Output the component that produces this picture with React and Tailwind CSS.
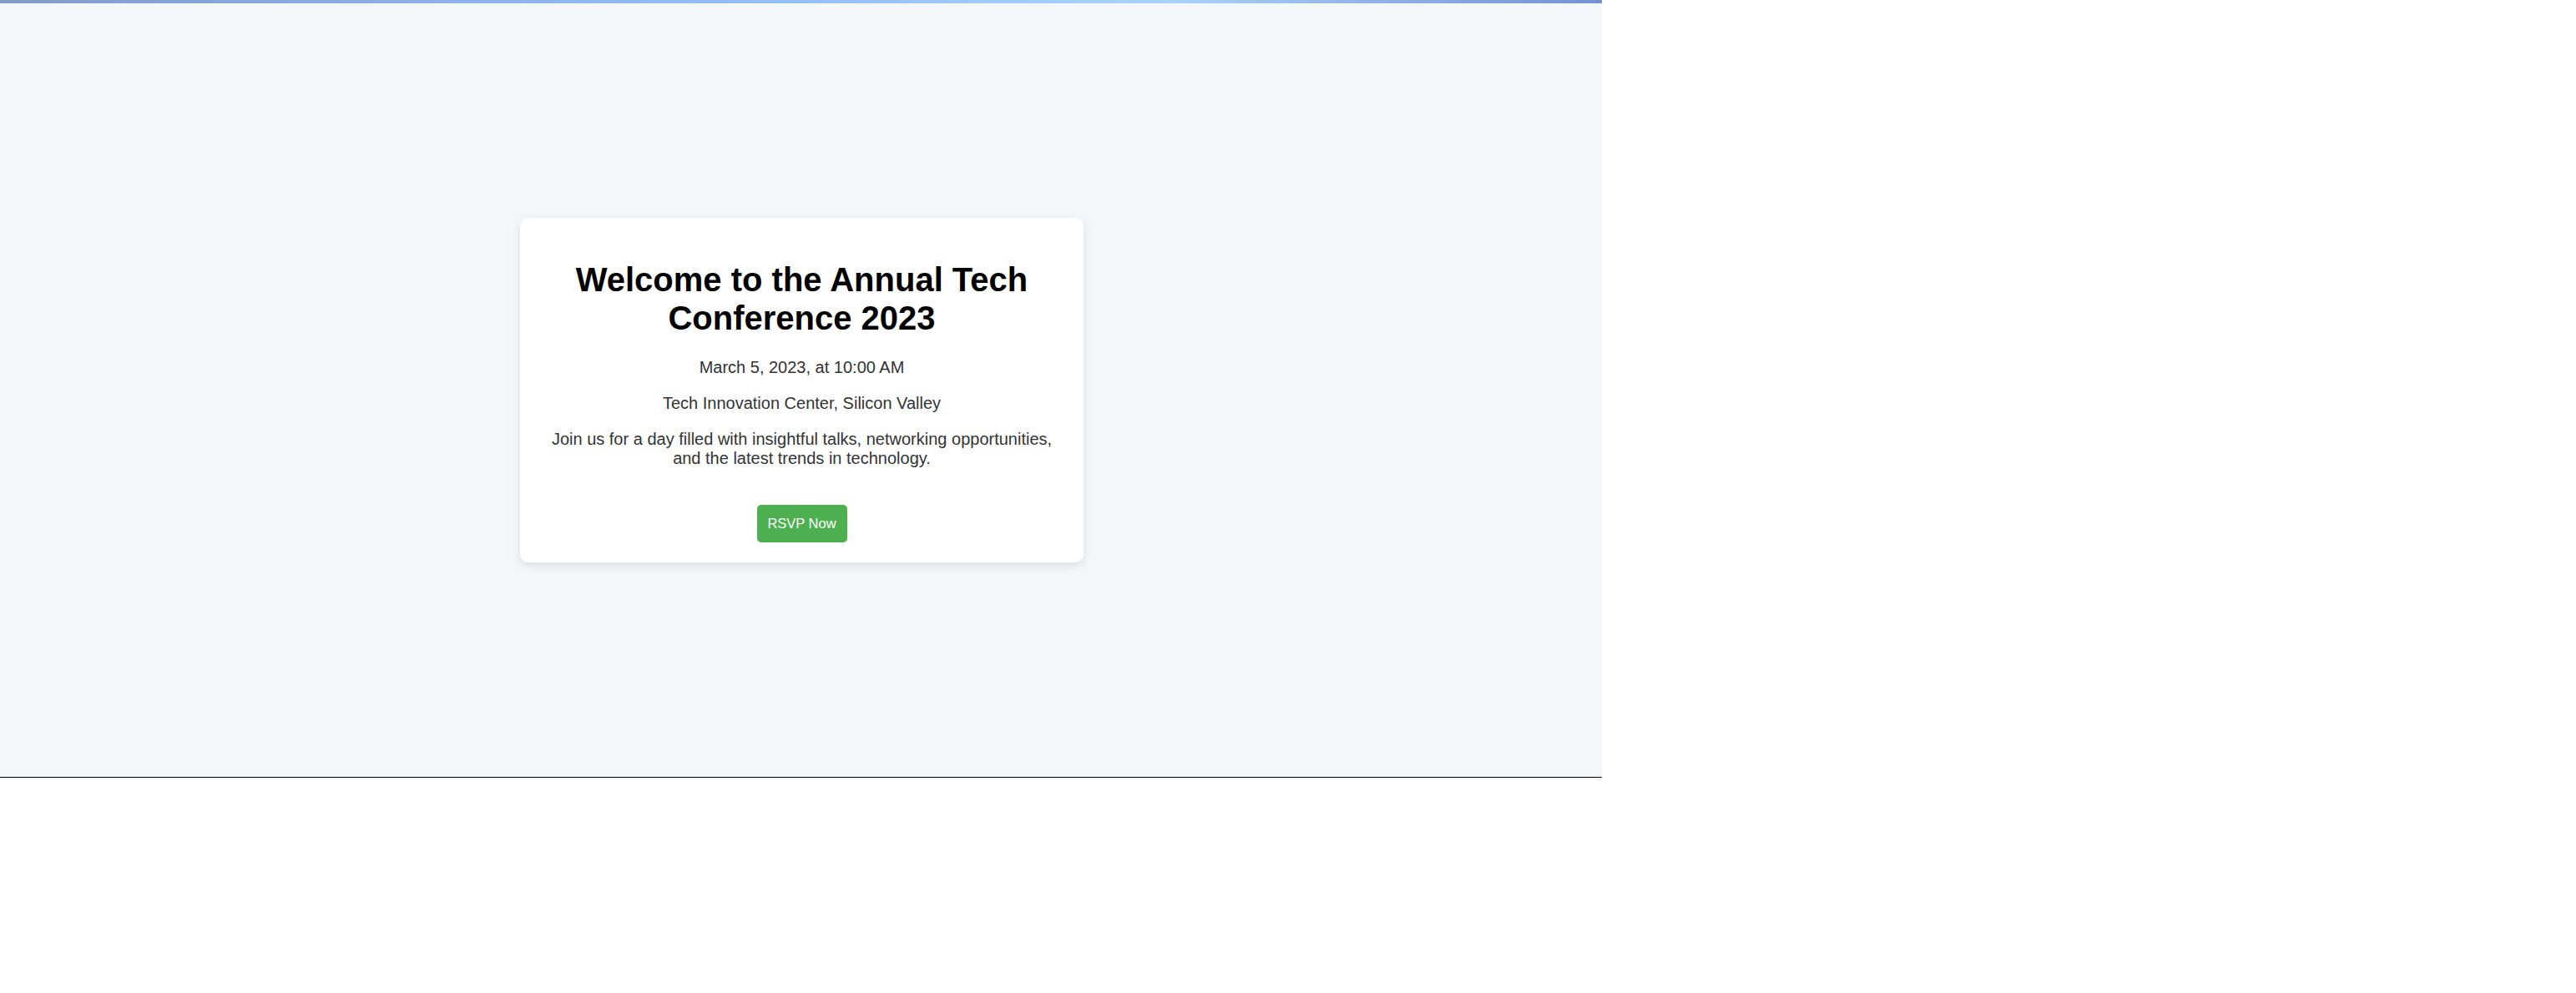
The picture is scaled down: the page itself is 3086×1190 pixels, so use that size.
export default function App() {
  return (
    <div className="w-[1919px] h-[932px] bg-[#f4f7fa] border-b border-black flex flex-col font-['Liberation_Sans',Arial,sans-serif]">
      <div className="h-[4px] bg-[linear-gradient(to_right,#7f9bc9_0%,#8fb3ec_30%,#94c0f8_50%,#a9d3f8_73%,#7490d4_100%)]" />
      <div className="flex-1 flex items-center justify-center">
        <div className="w-[675px] bg-white rounded-[10px] shadow-[0_4px_12px_rgba(0,0,0,0.1)] px-6 pt-[51px] pb-6 text-center translate-x-[1px]">
          <h1 className="text-[40px] leading-[46px] font-bold text-black">
            Welcome to the Annual Tech Conference 2023
          </h1>
          <p className="mt-[25px] text-[20px] leading-[23px] text-[#333]">March 5, 2023, at 10:00 AM</p>
          <p className="mt-[20px] text-[20px] leading-[23px] text-[#333]">Tech Innovation Center, Silicon Valley</p>
          <p className="mt-[20px] text-[20px] leading-[23px] text-[#333]">
            Join us for a day filled with insightful talks, networking opportunities, and the latest trends in technology.
          </p>
          <div className="mt-[44px] flex justify-center">
            <button className="w-[108px] h-[45px] bg-[#4caf50] text-white text-[16.5px] rounded-[5px] flex items-center justify-center">
              RSVP Now
            </button>
          </div>
        </div>
      </div>
    </div>
  );
}
